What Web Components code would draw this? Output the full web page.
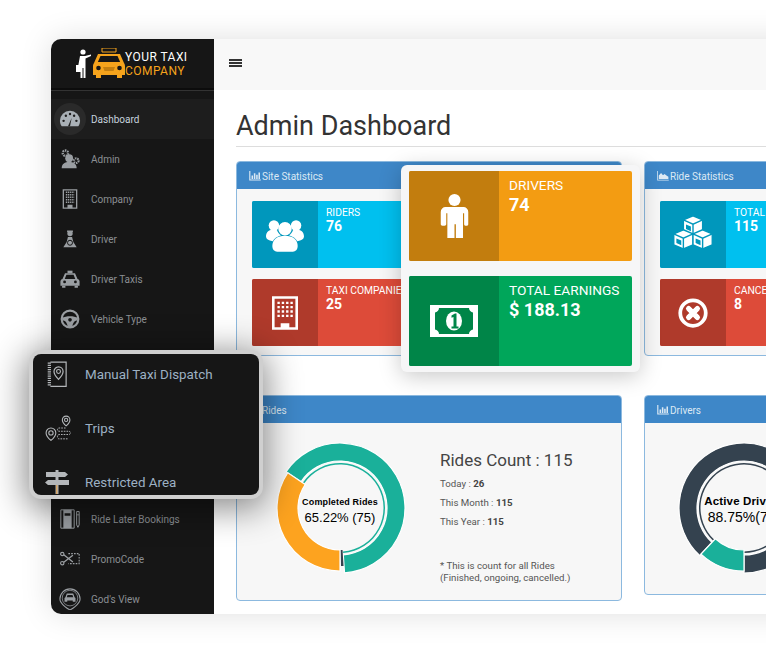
<!DOCTYPE html>
<html>
<head>
<meta charset="utf-8">
<title>Admin Dashboard</title>
<style>
	html, body { margin: 0; height: 100%; overflow: hidden; background: #fff; }
	body { font-family: Roboto, "Liberation Sans", sans-serif; }
</style>
</head>
<body>
<taxi-page></taxi-page>

<script>
const ICONS = {
	gauge: '<path d="M12 3a11 11 0 0 0-11 11c0 2.400.8 4.600 2 6h18c1.200-1.400 2-3.600 2-6A11 11 0 0 0 12 3z" fill="currentColor"/><path d="M12 20l1.800-9-4 9z" fill="#1e1e1e"/><g fill="#1e1e1e"><circle cx="5" cy="14" r="1.300"/><circle cx="7.500" cy="8.500" r="1.300"/><circle cx="12" cy="6.500" r="1.300"/><circle cx="16.500" cy="8.500" r="1.300"/><circle cx="19" cy="14" r="1.300"/></g>',
	admin: '<circle cx="11" cy="11" r="4.700" fill="currentColor"/><path d="M2 23c0-5.500 4-7.500 9-7.500s9 2 9 7.500z" fill="currentColor"/><circle cx="6.500" cy="5" r="3.200" fill="none" stroke="currentColor" stroke-width="2.800" stroke-dasharray="1.800 1"/><circle cx="19.500" cy="14" r="2.800" fill="none" stroke="currentColor" stroke-width="2.600" stroke-dasharray="1.700 .9"/>',
	company: '<path d="M4 1h16v22H4z" fill="none" stroke="currentColor" stroke-width="1.600"/><path d="M7 4h10M7 7h10M7 10h10M7 13h10M7 16h10" stroke="currentColor" stroke-width="1.800" stroke-dasharray="1.500 .8"/><path d="M9 23v-4h6v4z" fill="currentColor"/>',
	driver: '<circle cx="12" cy="5.500" r="3.200" fill="currentColor"/><path d="M8.500 1.800h7v2h-7z" fill="currentColor"/><path d="M9.500 9.500h5l1.500 6 4 6.500H4l4-6.500z" fill="currentColor"/><circle cx="12" cy="16.500" r="3" fill="none" stroke="#161616" stroke-width="1.200"/>',
	taxi: '<path d="M9 2h6v3H9z" fill="currentColor"/><path d="M6 5h12l3 7c1.500.4 2.500 1.500 2.500 3v5h-23v-5c0-1.500 1-2.600 2.500-3z" fill="currentColor"/><path d="M7.700 7h8.600l2 5H5.700z" fill="#161616"/><circle cx="5.500" cy="15.500" r="1.700" fill="#161616"/><circle cx="18.500" cy="15.500" r="1.700" fill="#161616"/><path d="M2.500 20h4v2.500h-4zM17.500 20h4v2.500h-4z" fill="currentColor"/>',
	wheel: '<circle cx="12" cy="12" r="10" fill="none" stroke="currentColor" stroke-width="2.600"/><path d="M2.500 10.500c5-2.500 14-2.500 19 0l-.5 3c-2.500.3-5 1.700-6 6.500l-1 2h-4l-1-2c-1-4.800-3.500-6.200-6-6.500z" fill="currentColor"/><circle cx="12" cy="13" r="2.200" fill="#161616"/>',
	book: '<path d="M5 1h14.500v22.500H5" fill="none" stroke="currentColor" stroke-width="1.100"/><path d="M2.500 2h3M2.500 4h3M2.500 6h3M2.500 8h3M2.500 10h3M2.500 12h3M2.500 14h3M2.500 16h3M2.500 18h3M2.500 20h3M2.500 22h3" stroke="currentColor" stroke-width="1.100"/><path d="M12.500 5.500a4.200 4.200 0 0 0-4.200 4.200c0 3 4.200 7.300 4.200 7.300s4.200-4.300 4.200-7.300a4.200 4.200 0 0 0-4.200-4.200z" fill="none" stroke="currentColor" stroke-width="1.100"/><circle cx="12.500" cy="9.700" r="1.800" fill="none" stroke="currentColor" stroke-width="1"/>',
	trips: '<path d="M5.500 12a4.500 4.500 0 0 0-4.500 4.500c0 3 4.500 7 4.500 7s4.500-4 4.500-7A4.500 4.500 0 0 0 5.500 12z" fill="none" stroke="currentColor" stroke-width="1"/><circle cx="5.500" cy="16.500" r="2" fill="none" stroke="currentColor"/><path d="M19.500 1a3.500 3.500 0 0 0-3.500 3.500c0 2.500 3.500 5.500 3.500 5.500s3.500-3 3.500-5.500A3.500 3.500 0 0 0 19.500 1z" fill="none" stroke="currentColor" stroke-width="1"/><circle cx="19.500" cy="4.500" r="1.500" fill="none" stroke="currentColor"/><path d="M19 12h-6c-2 0-2 3 0 3h9c2 0 2 3 0 3h-9c-2 0-2 4 0 4h8" fill="none" stroke="currentColor" stroke-width=".9" stroke-dasharray="1.500 1"/>',
	sign: '<path d="M1 2h19l3 2.500-3 2.500H1zM3 10h21v5H3L0 12.500z" fill="currentColor"/><path d="M10.500 0h3v2h-3zM10.500 7h3v3h-3z" fill="currentColor"/><path d="M10.500 15h3v9h-3z" fill="currentColor"/><path d="M11.300 15h1v9h-1z" fill="#e49a3c"/>',
	notebook: '<path d="M1 1h16v22H1z" fill="none" stroke="currentColor" stroke-width="1.200"/><path d="M4 1h10v22H4z" fill="currentColor"/><path d="M5.500 5h7v3h-7z" fill="#161616"/><path d="M20 3v16l1.500 3 1.500-3V3z" fill="none" stroke="currentColor" stroke-width="1.200"/><path d="M20 7h3" stroke="currentColor"/>',
	promo: '<circle cx="2.700" cy="6" r="2" fill="none" stroke="currentColor" stroke-width="1.400"/><circle cx="2.700" cy="17" r="2" fill="none" stroke="currentColor" stroke-width="1.400"/><path d="M4.500 7l11 8.500M4.500 16l11-8.500" stroke="currentColor" stroke-width="1.600"/><path d="M10 5.500h13v12H10" fill="none" stroke="currentColor" stroke-width="1.300" stroke-dasharray="2 1.400"/>',
	godview: '<path d="M12 1a11 11 0 0 0-11 11c0 6 11 12 11 12s11-6 11-12A11 11 0 0 0 12 1z" fill="none" stroke="currentColor" stroke-width="1.200"/><circle cx="12" cy="11" r="8.500" fill="none" stroke="currentColor" stroke-width=".8"/><path d="M8.500 6h7l1.500 4 1 1v4h-3v-1.500H9V15H6v-4l1-1z" fill="currentColor"/><path d="M9.300 7.500h5.400l.8 2.500h-7z" fill="#161616"/>',
	users: '<circle cx="12" cy="8" r="4.700" fill="currentColor" stroke="#0097bc" stroke-width=".9"/><circle cx="5" cy="6" r="3.300" fill="currentColor"/><circle cx="19" cy="6" r="3.300" fill="currentColor"/><path d="M0 13c0-3 2-4.500 5-4.500 1 0 1.500.2 2 .5.500 1.500 1.500 2.600 2.500 3.200C6.800 13 5 14.500 4.300 16 1.500 15.500 0 14.500 0 13zM24 13c0-3-2-4.500-5-4.500-1 0-1.500.2-2 .5-.5 1.500-1.500 2.600-2.500 3.200 2.700.8 4.500 2.300 5.200 3.800 2.800-.5 4.300-1.500 4.300-3z" fill="currentColor"/><path d="M4 19c0-4 3-6.500 8-6.500s8 2.500 8 6.500c0 2.500-1.500 3.500-3 3.500H7c-1.500 0-3-1-3-3.500z" fill="currentColor"/>',
	building: '<path d="M1.200 1.200h21.600v28.600H1.200z" fill="none" stroke="currentColor" stroke-width="2.400"/><g fill="currentColor"><path d="M5 5h2.200v2.200H5zm4 0h2.200v2.200H9zm4 0h2.200v2.200H13zm4 0h2.200v2.200H17zM5 9h2.200v2.200H5zm4 0h2.200v2.200H9zm4 0h2.200v2.200H13zm4 0h2.200v2.200H17zM5 13h2.200v2.200H5zm4 0h2.200v2.200H9zm4 0h2.200v2.200H13zm4 0h2.200v2.200H17zM5 17h2.200v2.200H5zm4 0h2.200v2.200H9zm4 0h2.200v2.200H13zm4 0h2.200v2.200H17z"/><path d="M8 30v-5h8v5z"/></g>',
	cubes: '<g fill="currentColor" stroke="#0097bc" stroke-width=".8" stroke-linejoin="round"><path d="M12 1l5.500 2.400v6.200L12 12 6.500 9.600V3.400z"/><path d="M6.500 9l5.500 2.400v6.200L6.500 20 1 17.600v-6.200z"/><path d="M17.500 9l5.500 2.400v6.200L17.500 20 12 17.600v-6.200z"/></g><g fill="none" stroke="#0097bc" stroke-width=".8"><path d="M6.500 3.400L12 5.800l5.500-2.400M12 5.800V12"/><path d="M1 11.400l5.500 2.400 5.500-2.400M6.500 13.800V20"/><path d="M12 11.400l5.500 2.400 5.500-2.400M17.500 13.800V20"/></g><g fill="#0097bc"><path d="M8 6l2.800 1.200v2.600L8 8.600zM2.500 14l2.800 1.200v2.600l-2.800-1.200zM13.500 14l2.800 1.200v2.600l-2.800-1.200z"/></g>',
	cancel: '<circle cx="12" cy="12" r="10.200" fill="none" stroke="currentColor" stroke-width="3"/><path d="M8.500 8.500l7 7M15.500 8.500l-7 7" fill="none" stroke="currentColor" stroke-width="4.200" stroke-linecap="round"/>',
	person: '<circle cx="12" cy="4.400" r="4.400" fill="currentColor"/><path d="M5.500 9.500h13a3.500 3.500 0 0 1 3.500 3.500v9c0 1.500-3 1.500-3 0v-8h-.8v18h-5.200V22h-1v10H6.800V14H6v8c0 1.500-4 1.500-4 0v-9a3.500 3.500 0 0 1 3.500-3.500z" fill="currentColor"/>',
	money: '<path fill-rule="evenodd" d="M0 0h48v32H0zM9 3c0 2.500-2 4-4 4.500v17c2 .5 4 2 4 4.500h30c0-2.500 2-4 4-4.500v-17C41 7 39 5.500 39 3z" fill="currentColor"/><ellipse cx="24" cy="16" rx="8" ry="9.500" fill="currentColor"/><path d="M21.500 10.500l3.500-2h1.500v13h2v2h-7v-2h2V12l-2 .8z" fill="#008548"/>',
	bars: '<path d="M0 0h1.500v11H15v1.500H0z" fill="currentColor"/><path d="M3 6h2v4.500H3zM6 3h2v7.500H6zM9 5h2v5.500H9zM12 2h2v8.500h-2z" fill="currentColor"/>',
	area: '<path d="M0 0h1v11.500h14v1H0z" fill="currentColor"/><path d="M2 10.500V6l3-3.500 2.500 3 2-1.500 2.500 2 2.500 1.500v3z" fill="currentColor"/>'
};

class AppIcon extends HTMLElement {
	connectedCallback() {
		const size = this.getAttribute('size') || 24;
		const height = this.getAttribute('height') || size;
		const box = this.getAttribute('box') || '0 0 24 24';
		this.attachShadow({mode: 'open'}).innerHTML = `<style>
			:host { display: inline-flex; line-height: 0; }
		</style>
		<svg width="${size}" height="${height}" viewBox="${box}">${ICONS[this.getAttribute('name')]}</svg>`;
	}
}

class NavItem extends HTMLElement {
	connectedCallback() {
		const size = this.getAttribute('size') || 20;
		this.attachShadow({mode: 'open'}).innerHTML = `<style>
			:host { display: flex; align-items: center; height: 40px; color: #8b8f93; font-size: 10px; }
			:host([active]) { background: #1d1d1d; color: #c6d2dd; }
			.ico { width: 32px; height: 32px; margin-left: 3px; margin-right: 5px; border-radius: 50%; display: flex; align-items: center; justify-content: center; color: #9a9ea2; }
			:host([active]) .ico { background: #2a2a2a; color: #a9b0b6; }
		</style>
		<span class="ico"><app-icon name="${this.getAttribute('icon')}" size="${size}"></app-icon></span>
		<slot></slot>`;
	}
}

class SideNav extends HTMLElement {
	connectedCallback() {
		this.attachShadow({mode: 'open'}).innerHTML = `<style>
			:host { display: block; width: 163px; flex: none; background: #161616; box-sizing: border-box; }
			.logo { height: 51px; box-sizing: border-box; border-bottom: 2px solid #0c0c0c; box-shadow: 0 1px 0 #333; display: flex; align-items: center; padding-left: 25px; }
			.words { font-size: 12px; line-height: 14px; letter-spacing: .45px; color: #fff; white-space: nowrap; }
			.words b { display: block; font-weight: 400; color: #f5a31c; }
			nav { padding-top: 9px; }
			.under-menu { height: 160px; }
		</style>
		<div class="logo">
			<svg width="49" height="31" viewBox="0 0 49 31">
				<circle cx="7" cy="4" r="2.600" fill="#fff"/>
				<path d="M4 8h5l6-1.500v1.500l-5.500 2.500V30H7.500V20h-1v10H4.500V19H2z" fill="#fff"/>
				<path d="M0 17h6v7H0z" fill="#fff"/>
				<path d="M26 0h14v4H26z" fill="none" stroke="#f5a31c" stroke-width="1"/>
				<path d="M22 6h22l4 9c.7 1 1 2 1 3v9h-3v3h-5v-3H25v3h-5v-3h-3v-9c0-1 .3-2 1-3z" fill="#f5a31c"/>
				<path d="M24.500 8h17l2.600 6H21.900z" fill="#161616"/>
				<circle cx="22.500" cy="20" r="2.300" fill="#161616"/>
				<circle cx="43.500" cy="20" r="2.300" fill="#161616"/>
				<path d="M27 19h12l-1.500 4h-9z" fill="#c47f10"/>
			</svg>
			<span class="words">YOUR TAXI<b>COMPANY</b></span>
		</div>
		<nav>
			<nav-item icon="gauge" size="22" active>Dashboard</nav-item>
			<nav-item icon="admin">Admin</nav-item>
			<nav-item icon="company">Company</nav-item>
			<nav-item icon="driver">Driver</nav-item>
			<nav-item icon="taxi">Driver Taxis</nav-item>
			<nav-item icon="wheel">Vehicle Type</nav-item>
			<div class="under-menu"></div>
			<nav-item icon="notebook">Ride Later Bookings</nav-item>
			<nav-item icon="promo">PromoCode</nav-item>
			<nav-item icon="godview" size="22">God's View</nav-item>
		</nav>`;
	}
}

class StatTile extends HTMLElement {
	connectedCallback() {
		const size = this.getAttribute('size') || 38;
		const height = this.getAttribute('iconh') || size;
		const box = this.getAttribute('box') || '0 0 24 24';
		this.attachShadow({mode: 'open'}).innerHTML = `<style>
			:host { display: flex; height: 67px; background: var(--tile); color: #fff; border-radius: 2px; overflow: hidden; }
			:host([big]) { height: 90px; }
			.side { width: 66px; flex: none; background: var(--tile-dark); display: flex; align-items: center; justify-content: center; }
			:host([big]) .side { width: 90px; }
			.txt { padding: 5px 8px; white-space: nowrap; }
			:host([big]) .txt { padding: 5px 10px; }
			.lbl { font-size: 10.300px; line-height: 13px; }
			:host([big]) .lbl { font-size: 13.700px; line-height: 19px; }
			.num { font-size: 14px; font-weight: 700; line-height: 17px; margin-top: -1px; }
			:host([big]) .num { font-size: 18px; line-height: 23px; margin-top: -2px; }
		</style>
		<div class="side"><app-icon name="${this.getAttribute('icon')}" size="${size}" height="${height}" box="${box}"></app-icon></div>
		<div class="txt">
			<div class="lbl">${this.getAttribute('label')}</div>
			<div class="num">${this.getAttribute('value')}</div>
		</div>`;
	}
}

class PanelCard extends HTMLElement {
	connectedCallback() {
		const icon = this.getAttribute('icon');
		this.attachShadow({mode: 'open'}).innerHTML = `<style>
			:host { display: block; box-sizing: border-box; border: 1px solid #8cb9df; border-radius: 4px; background: #f7f7f7; overflow: hidden; }
			header { height: 27px; box-sizing: border-box; padding: 1px 0 0 12px; background: #3e87c8; color: #dce9f4; font-size: 10px; display: flex; align-items: center; }
			app-icon { margin-right: 1px; }
		</style>
		<header><app-icon name="${icon}" size="12" height="10" box="0 0 15 13"></app-icon>${this.getAttribute('heading')}</header>
		<slot></slot>`;
	}
}

class DonutChart extends HTMLElement {
	connectedCallback() {
		// each part: start angle, end angle, inner r, outer r, colour (degrees clockwise from the top)
		const parts = JSON.parse(this.getAttribute('parts'));
		const point = (r, deg) => {
			const rad = (deg - 90) * Math.PI / 180;
			return (70 + r * Math.cos(rad)).toFixed(2) + ' ' + (70 + r * Math.sin(rad)).toFixed(2);
		};
		const paths = parts.map(function(part) {
			const [from, to, inner, outer, colour, edge] = part;
			const large = (to - from) > 180 ? 1 : 0;
			const line = edge ? ' stroke="#fff" stroke-width="1.200"' : '';
			return `<path fill="${colour}"${line} d="M${point(outer, from)}A${outer} ${outer} 0 ${large} 1 ${point(outer, to)}L${point(inner, to)}A${inner} ${inner} 0 ${large} 0 ${point(inner, from)}Z"/>`;
		}).join('');
		this.attachShadow({mode: 'open'}).innerHTML = `<style>
			:host { display: block; position: relative; width: 140px; height: 140px; flex: none; color: #000; font-family: "Liberation Sans", Arial, sans-serif; }
			svg { display: block; }
			.mid { position: absolute; left: 0; right: 0; top: 59px; text-align: center; white-space: nowrap; }
			b { display: block; font-size: 9px; line-height: 11px; letter-spacing: .15px; }
			span { font-size: 13px; line-height: 15px; }
			:host([wide]) .mid { top: 57px; }
			:host([wide]) b { font-size: 11.500px; line-height: 13px; }
			:host([wide]) span { font-size: 14px; line-height: 17px; }
		</style>
		<svg width="140" height="140" viewBox="0 0 140 140">${paths}</svg>
		<div class="mid"><b>${this.getAttribute('title')}</b><span>${this.getAttribute('value')}</span></div>`;
	}
}

class RidesSummary extends HTMLElement {
	connectedCallback() {
		this.attachShadow({mode: 'open'}).innerHTML = `<style>
			:host { display: block; color: #555; font-size: 9.700px; white-space: nowrap; padding-top: 10px; }
			h3 { margin: 0 0 1.500px; font-size: 17px; line-height: 24px; font-weight: 400; color: #444; }
			p { margin: 0; line-height: 19px; }
			b { color: #444; }
			.note { margin-top: 29px; line-height: 12px; }
		</style>
		<h3>Rides Count : 115</h3>
		<p>Today : <b>26</b></p>
		<p>This Month : <b>115</b></p>
		<p>This Year : <b>115</b></p>
		<p class="note">* This is count for all Rides<br>(Finished, ongoing, cancelled.)</p>`;
	}
}

class DashboardView extends HTMLElement {
	connectedCallback() {
		const teal = '#1ab09a';
		const dark = '#34424f';
		const orange = '#fda31f';
		this.attachShadow({mode: 'open'}).innerHTML = `<style>
			:host { display: block; flex: 1; min-width: 0; background: #fff; }
			.top { height: 51px; box-sizing: border-box; padding: 0 0 4px 15px; background: #f8f8f8; display: flex; align-items: center; }
			.burger { width: 13px; height: 8px; background: repeating-linear-gradient(#333 0 2px, transparent 2px 3px); }
			.body { padding: 0 0 0 22px; }
			h1 { margin: 0; height: 57px; box-sizing: border-box; padding-top: 20px; font-size: 27px; line-height: 32px; font-weight: 400; color: #333; border-bottom: 1px solid #ddd; white-space: nowrap; }
			.grid { display: grid; grid-template-columns: 386px 386px; column-gap: 22px; padding-top: 14px; }
			.stats { height: 195px; }
			.tiles { display: grid; row-gap: 11px; padding: 12px 15px; }
			.row2 { margin-top: 39px; align-self: start; }
			.rides { height: 206px; }
			.drivers { height: 200px; }
			.chart-row { display: flex; padding: 15px 0 0 33px; gap: 30px; }
			.chart-row.solo { padding-left: 29px; }
			.tiles stat-tile { --tile: #00c0ef; --tile-dark: #0097bc; }
			.tiles stat-tile.red { --tile: #dd4b39; --tile-dark: #af3a2b; }
		</style>
		<div class="top"><div class="burger"></div></div>
		<div class="body">
			<h1>Admin Dashboard</h1>
			<div class="grid">
				<panel-card class="stats" icon="bars" heading="Site Statistics">
					<div class="tiles">
						<stat-tile icon="users" label="RIDERS" value="76" size="38" iconh="38"></stat-tile>
						<stat-tile class="red" icon="building" label="TAXI COMPANIES" value="25" size="26" iconh="34" box="0 0 24 31"></stat-tile>
					</div>
				</panel-card>
				<panel-card class="stats" icon="area" heading="Ride Statistics">
					<div class="tiles">
						<stat-tile icon="cubes" label="TOTAL RIDES" value="115" size="42"></stat-tile>
						<stat-tile class="red" icon="cancel" label="CANCELLED RIDES" value="8" size="30"></stat-tile>
					</div>
				</panel-card>
				<panel-card class="row2 rides" icon="bars" heading="Rides">
					<div class="chart-row">
						<donut-chart title="Completed Rides" value="65.22% (75)" parts='[[-56,176,47,65,"${teal}",1],[-56,176,43.500,45,"${teal}"],[180,304,42,63,"${orange}",1],[176.500,179,42,58,"${dark}"]]'></donut-chart>
						<rides-summary></rides-summary>
					</div>
				</panel-card>
				<panel-card class="row2 drivers" icon="bars" heading="Drivers">
					<div class="chart-row solo">
						<donut-chart wide title="Active Drivers" value="88.75%(71)" parts='[[223,540,47,65,"${dark}",1],[223,540,43.500,45,"${dark}"],[180,223,42,63,"${teal}",1]]'></donut-chart>
					</div>
				</panel-card>
			</div>
		</div>`;
	}
}

class DispatchMenu extends HTMLElement {
	connectedCallback() {
		this.attachShadow({mode: 'open'}).innerHTML = `<style>
			:host { position: absolute; left: 33px; top: 354px; width: 226px; height: 141px; overflow: hidden; background: #161616; border-radius: 8px; color: #9db1c4; font-size: 13.400px; }
			.row { display: flex; align-items: center; height: 40px; margin-bottom: 14px; white-space: nowrap; }
			.ico { width: 52px; padding-left: 12px; box-sizing: border-box; flex: none; color: #b4b7ba; display: flex; }
		</style>
		<div class="row"><span class="ico"><app-icon name="book" size="26"></app-icon></span>Manual Taxi Dispatch</div>
		<div class="row"><span class="ico"><app-icon name="trips" size="26"></app-icon></span>Trips</div>
		<div class="row"><span class="ico"><app-icon name="sign" size="24"></app-icon></span>Restricted Area</div>`;
	}
}

class StatPopup extends HTMLElement {
	connectedCallback() {
		this.attachShadow({mode: 'open'}).innerHTML = `<style>
			:host { position: absolute; left: 401px; top: 165px; width: 239px; height: 207px; box-sizing: border-box; padding: 6px 8px; background: #f6f6f7; border-radius: 6px; box-shadow: 0 4px 22px rgba(0,0,0,.22); display: grid; row-gap: 15px; align-content: start; }
			.amber { --tile: #f39c12; --tile-dark: #c27d0e; }
			.green { --tile: #00a65a; --tile-dark: #008548; }
		</style>
		<stat-tile big class="amber" icon="person" label="DRIVERS" value="74" size="33" iconh="44" box="0 0 24 32"></stat-tile>
		<stat-tile big class="green" icon="money" label="TOTAL EARNINGS" value="$ 188.13" size="48" iconh="32" box="0 0 48 32"></stat-tile>`;
	}
}

class TaxiPage extends HTMLElement {
	connectedCallback() {
		this.attachShadow({mode: 'open'}).innerHTML = `<style>
			:host { display: block; position: relative; width: 766px; height: 655px; overflow: hidden; background: #fff; }
			.frame { position: absolute; left: 51px; top: 39px; width: 1040px; height: 575px; display: flex; overflow: hidden; border-radius: 10px 0 0 10px; box-shadow: 0 0 32px rgba(0,0,0,.13); }
			dispatch-menu { box-shadow: 0 0 0 4px #cfcfcf, 0 6px 34px 8px rgba(0,0,0,.45); }
		</style>
		<div class="frame">
			<side-nav></side-nav>
			<dashboard-view></dashboard-view>
		</div>
		<dispatch-menu></dispatch-menu>
		<stat-popup></stat-popup>`;
	}
}

customElements.define('app-icon', AppIcon);
customElements.define('nav-item', NavItem);
customElements.define('side-nav', SideNav);
customElements.define('stat-tile', StatTile);
customElements.define('panel-card', PanelCard);
customElements.define('donut-chart', DonutChart);
customElements.define('rides-summary', RidesSummary);
customElements.define('dashboard-view', DashboardView);
customElements.define('dispatch-menu', DispatchMenu);
customElements.define('stat-popup', StatPopup);
customElements.define('taxi-page', TaxiPage);
</script>
</body>
</html>
